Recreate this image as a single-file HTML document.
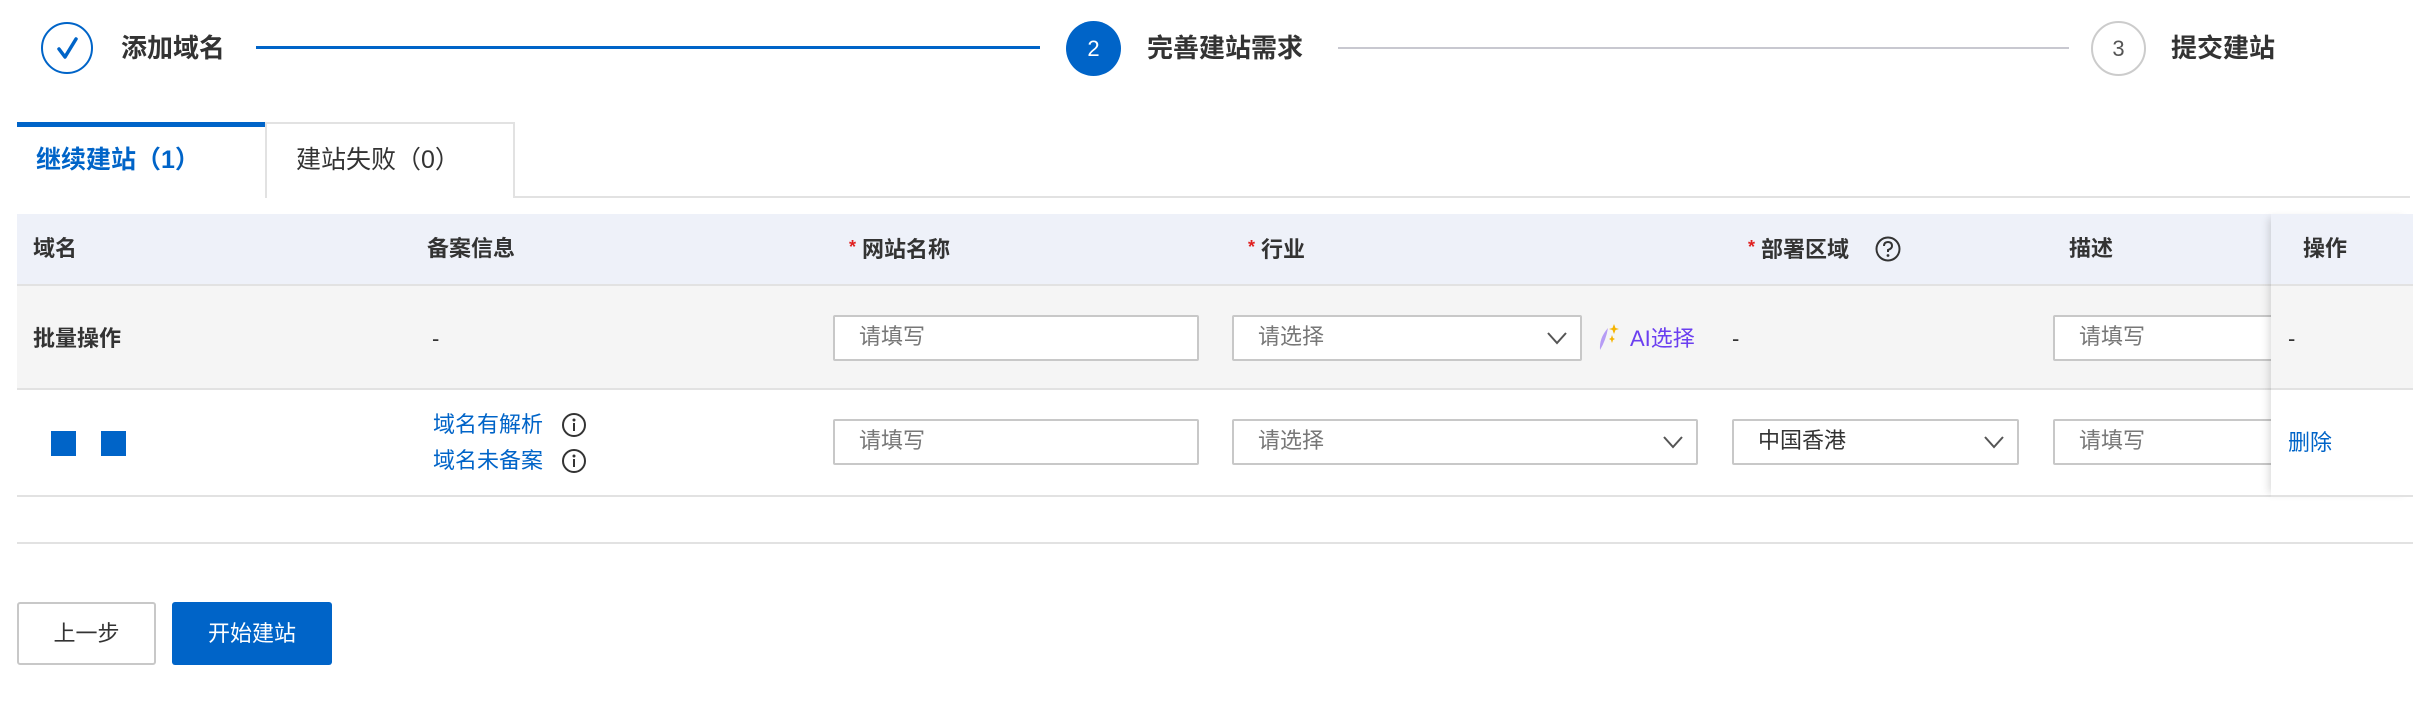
<!DOCTYPE html>
<html><head><meta charset="utf-8"><style>
*{box-sizing:border-box;margin:0;padding:0}
body{width:2434px;height:706px;background:#fff;font-family:"Liberation Sans","Noto Sans CJK SC",sans-serif;color:#333;position:relative;overflow:hidden}
.a{position:absolute}
.t{font-size:22px;line-height:1;white-space:nowrap}
.inp{position:absolute;background:#fff;border:2px solid #c8c8c8;border-radius:2px;height:46px;font-size:22px;color:#777;padding:0 0 0 24px;line-height:40px;white-space:nowrap}
.arr{position:absolute;right:12px;top:11px}
.star{color:#e02020;font-size:18px;margin-right:6px;vertical-align:4px}
</style></head><body>
<!-- steps -->
<div class="a" style="left:41px;top:22px;width:52px;height:52px;border:2px solid #0064c8;border-radius:50%"></div>
<svg class="a" style="left:41px;top:22px" width="52" height="52"><path d="M18 27 L24 35 L35 17" fill="none" stroke="#0064c8" stroke-width="3.5" stroke-linecap="round" stroke-linejoin="round"/></svg>
<div class="a t" style="left:121px;top:35px;font-size:26px;font-weight:bold;color:#333">添加域名</div>
<div class="a" style="left:256px;top:46px;width:784px;height:3px;background:#0064c8"></div>
<div class="a" style="left:1066px;top:21px;width:55px;height:55px;border-radius:50%;background:#0064c8;color:#fff;font-size:22px;text-align:center;line-height:55px">2</div>
<div class="a t" style="left:1147px;top:35px;font-size:26px;font-weight:bold;color:#333">完善建站需求</div>
<div class="a" style="left:1338px;top:47px;width:731px;height:2px;background:#c8c8d0"></div>
<div class="a" style="left:2091px;top:21px;width:55px;height:55px;border-radius:50%;border:2px solid #ccc;color:#555;font-size:22px;text-align:center;line-height:51px">3</div>
<div class="a t" style="left:2171px;top:35px;font-size:26px;font-weight:bold;color:#333">提交建站</div>
<!-- tabs -->
<div class="a" style="left:17px;top:196px;width:2393px;height:2px;background:#e2e2e2"></div>
<div class="a" style="left:17px;top:122px;width:249px;height:76px;background:#fff;border-top:5px solid #0064c8"></div>
<div class="a t" style="left:36px;top:148px;font-size:25px;color:#0064c8;font-weight:bold">继续建站（1）</div>
<div class="a" style="left:265px;top:122px;width:250px;height:76px;border:2px solid #e2e2e2;border-bottom:none;background:#fff"></div>
<div class="a t" style="left:296px;top:148px;font-size:25px;color:#333">建站失败（0）</div>
<!-- table -->
<div class="a" style="left:17px;top:214px;width:2396px;height:72px;background:#eef1f9;border-bottom:2px solid #e2e2e2"></div>
<div class="a" style="left:17px;top:286px;width:2396px;height:104px;background:#f5f5f5;border-bottom:2px solid #e2e2e2"></div>
<div class="a" style="left:17px;top:390px;width:2396px;height:107px;background:#fff;border-bottom:2px solid #e2e2e2"></div>
<div class="a" style="left:17px;top:542px;width:2396px;height:2px;background:#e2e2e2"></div>
<div class="a t" style="left:33px;top:238px;font-weight:bold">域名</div>
<div class="a t" style="left:427px;top:238px;font-weight:bold">备案信息</div>
<div class="a t" style="left:849px;top:238px;font-weight:bold"><span class="star">*</span>网站名称</div>
<div class="a t" style="left:1248px;top:238px;font-weight:bold"><span class="star">*</span>行业</div>
<div class="a t" style="left:1748px;top:238px;font-weight:bold"><span class="star">*</span>部署区域</div>
<svg class="a" style="left:1874px;top:235px" width="28" height="28"><circle cx="14" cy="14" r="11.5" fill="none" stroke="#333" stroke-width="2"/><path d="M10 11 Q10 7 14 7 Q18 7 18 11 Q18 13.5 14 15 L14 17" fill="none" stroke="#333" stroke-width="2"/><circle cx="14" cy="20.5" r="1.4" fill="#333"/></svg>
<div class="a t" style="left:2069px;top:238px;font-weight:bold">描述</div>
<div class="a t" style="left:33px;top:328px;font-weight:bold">批量操作</div>
<div class="a t" style="left:432px;top:328px">-</div>
<div class="inp" style="left:833px;top:315px;width:366px">请填写</div>
<div class="inp" style="left:1232px;top:315px;width:350px">请选择<svg class="arr" width="22" height="20"><path d="M2 5 L11 15 L20 5" fill="none" stroke="#555" stroke-width="2"/></svg></div>
<svg class="a" style="left:1594px;top:322px" width="32" height="32"><path d="M6 28 Q5 16 14 6 Q12 18 6 28Z" fill="#b69cf5"/><path d="M20 2 L21.5 6 L25 7 L21.5 8 L20 12 L18.5 8 L15 7 L18.5 6Z" fill="#f5b400"/><path d="M18 13 L19 16 L21 17 L19 18 L18 21 L17 18 L15 17 L17 16Z" fill="#f5b400"/></svg>
<div class="a t" style="left:1630px;top:328px;color:#6b3ff0">AI选择</div>
<div class="a t" style="left:1732px;top:328px">-</div>
<div class="inp" style="left:2053px;top:315px;width:240px">请填写</div>
<div class="a" style="left:51px;top:431px;width:25px;height:25px;background:#0064c8"></div>
<div class="a" style="left:101px;top:431px;width:25px;height:25px;background:#0064c8"></div>
<div class="a t" style="left:433px;top:414px;color:#0064c8">域名有解析</div>
<div class="a t" style="left:433px;top:450px;color:#0064c8">域名未备案</div>
<svg class="a" style="left:561px;top:412px" width="26" height="26"><circle cx="13" cy="13" r="11" fill="none" stroke="#333" stroke-width="2"/><circle cx="13" cy="8" r="1.5" fill="#333"/><path d="M13 11 V19" stroke="#333" stroke-width="2"/></svg>
<svg class="a" style="left:561px;top:448px" width="26" height="26"><circle cx="13" cy="13" r="11" fill="none" stroke="#333" stroke-width="2"/><circle cx="13" cy="8" r="1.5" fill="#333"/><path d="M13 11 V19" stroke="#333" stroke-width="2"/></svg>
<div class="inp" style="left:833px;top:419px;width:366px">请填写</div>
<div class="inp" style="left:1232px;top:419px;width:466px">请选择<svg class="arr" width="22" height="20"><path d="M2 5 L11 15 L20 5" fill="none" stroke="#555" stroke-width="2"/></svg></div>
<div class="inp" style="left:1732px;top:419px;width:287px;color:#333">中国香港<svg class="arr" width="22" height="20"><path d="M2 5 L11 15 L20 5" fill="none" stroke="#555" stroke-width="2"/></svg></div>
<div class="inp" style="left:2053px;top:419px;width:240px">请填写</div>
<!-- fixed column -->
<div class="a" style="left:2271px;top:214px;width:142px;height:283px;box-shadow:-6px 0 8px -4px rgba(0,0,0,0.15)">
<div style="height:72px;background:#eef1f9;border-bottom:2px solid #e2e2e2"></div>
<div style="height:104px;background:#f5f5f5;border-bottom:2px solid #e2e2e2"></div>
<div style="height:107px;background:#fff;border-bottom:2px solid #e2e2e2"></div>
</div>
<div class="a t" style="left:2303px;top:238px;font-weight:bold">操作</div>
<div class="a t" style="left:2288px;top:328px">-</div>
<div class="a t" style="left:2288px;top:432px;color:#0064c8">删除</div>
<!-- buttons -->
<div class="a" style="left:17px;top:602px;width:139px;height:63px;border:2px solid #c8c8c8;border-radius:3px;font-size:22px;text-align:center;line-height:59px;color:#333">上一步</div>
<div class="a" style="left:172px;top:602px;width:160px;height:63px;background:#0064c8;border-radius:3px;font-size:22px;text-align:center;line-height:63px;color:#fff">开始建站</div>
</body></html>
